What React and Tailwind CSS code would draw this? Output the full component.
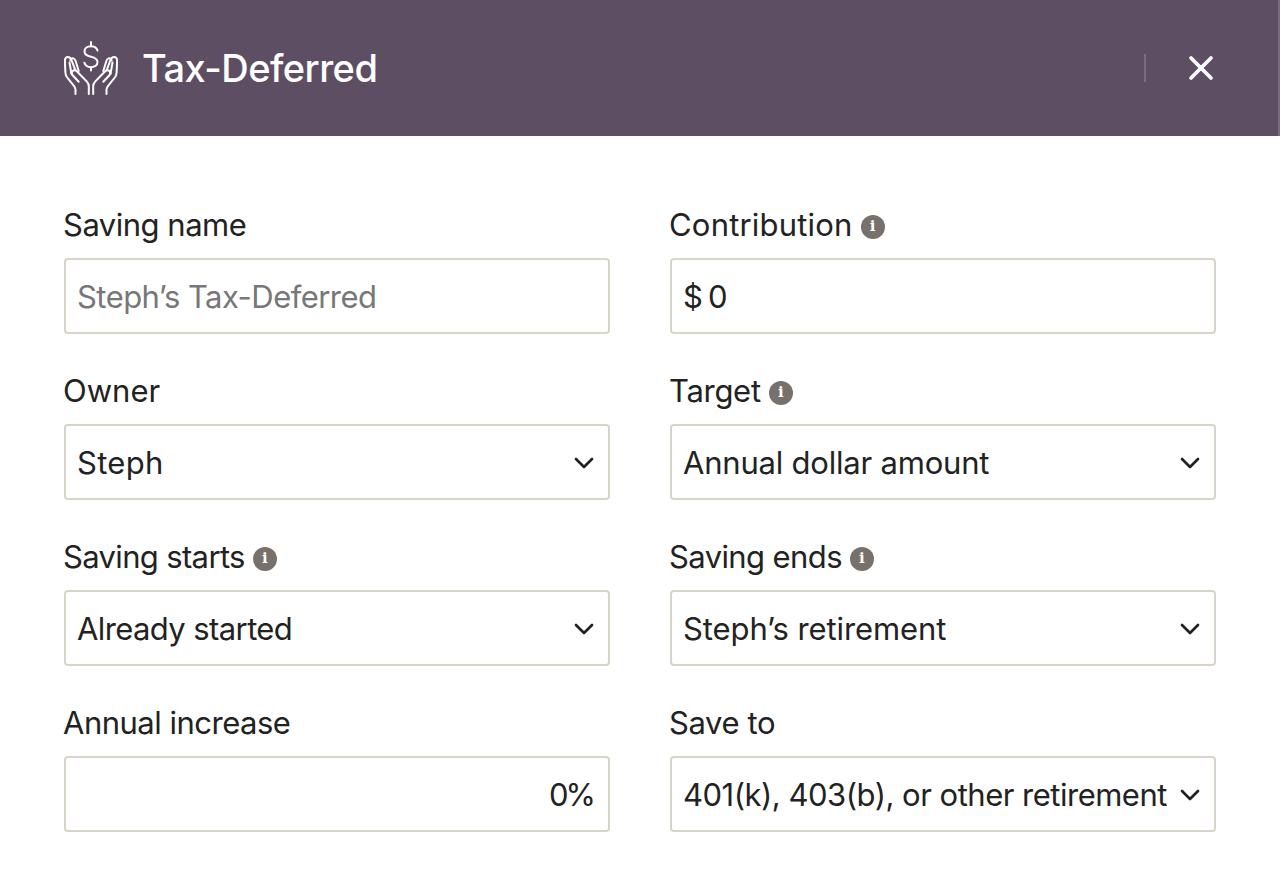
import { ChevronDown, X } from "lucide-react";

function HandsIcon() {
  const hand = (
    <>
      <path d="M11.5 53v-4.500c0-1.500-.8-2.600-1.800-3.800L3.200 36.500C2 35 1.500 33.600 1.400 31.800L.9 20.600c-.1-2.600 1-4.400 2.900-4.500 2-.1 3.100 1.300 3.900 3.400l3.600 9.700" />
      <path d="M6.400 19.500c.3-1.500 1.600-2.500 3-2.100 1.300.4 1.900 1.500 2.300 2.900l3 9.700" />
      <path d="M24.800 53v-7.500c0-2-.6-3.500-1.900-4.900L12.800 30.200c-1.300-1.400-3.200-1.300-4.300-.2-1.100 1.100-1.100 2.900.1 4.200l6.100 6.600" />
      <path d="M5.500 21.500l1.900 11" />
    </>
  );
  return (
    <svg width="54" height="54" viewBox="0 0 54 54" fill="none" stroke="white" strokeWidth="2" strokeLinecap="round" strokeLinejoin="round">
      <path d="M33.500 9.500c-.8-2.600-3.300-4.300-6.500-4.300-3.700 0-6.500 2.100-6.500 5.200 0 3.300 2.900 4.500 6.500 5.300 3.600.8 6.500 2.100 6.500 5.400 0 3.100-2.800 5.100-6.500 5.100-3.300 0-5.800-1.700-6.600-4.400" />
      <path d="M27 1v4.200M27 26.700v2.800" />
      {hand}
      <g transform="translate(54 0) scale(-1 1)">{hand}</g>
    </svg>
  );
}

function InfoDot() {
  return (
    <span className="mt-[3px] flex h-6 w-6 items-center justify-center rounded-full bg-[#77706b]">
      <span className="font-['DejaVu_Serif',serif] text-[15px] leading-none font-bold tracking-normal text-white">i</span>
    </span>
  );
}

function Field({ label, info, tracking = "tracking-[-0.4px]", children }) {
  return (
    <div>
      <div className={`mb-[14px] -ml-px flex h-[38px] items-center gap-2 text-[31px] leading-[38px] text-[#222222] ${tracking}`}>
        <span>{label}</span>
        {info && <InfoDot />}
      </div>
      {children}
    </div>
  );
}

const boxClass = "h-[76px] w-full rounded border-2 border-[#d9d4ca] bg-white pl-[11px] pr-3 text-[31px] text-[#222222] outline-none";

function Select({ value, tracking }) {
  return (
    <div className="relative">
      <select defaultValue={value} className={`${boxClass} appearance-none !pr-[42px] pt-[2px] ${tracking}`}>
        <option>{value}</option>
      </select>
      <ChevronDown className="pointer-events-none absolute top-1/2 right-[10px] h-8 w-8 -translate-y-[15px] text-[#222222]" strokeWidth={2} />
    </div>
  );
}

export default function App() {
  return (
    <div className="min-h-[896px] bg-white font-['Inter',sans-serif]">
      <header className="flex h-[136px] items-center border-r-2 border-[#7b6d80] bg-[#5d4e63] pr-[57px] pl-16">
        <HandsIcon />
        <h1 className="ml-6 text-[38px] leading-none font-medium tracking-[-0.55px] text-white">Tax-Deferred</h1>
        <div className="ml-auto h-7 w-0.5 bg-[#7b6d80]" />
        <button className="ml-[35px] text-white">
          <X className="h-10 w-10" strokeWidth={2.2} />
        </button>
      </header>

      <form className="grid grid-cols-2 gap-x-[60px] gap-y-[38px] px-16 pt-[70px]">
        <Field label="Saving name" tracking="tracking-[-0.5px]">
          <input className={`${boxClass} tracking-[-0.55px] placeholder:text-[#77777a]`} placeholder="Steph’s Tax-Deferred" />
        </Field>
        <Field label="Contribution" info tracking="tracking-[0.2px]">
          <input className={`${boxClass} tracking-[-0.3px] [word-spacing:-3px]`} defaultValue="$ 0" />
        </Field>
        <Field label="Owner" tracking="tracking-[0px]">
          <Select value="Steph" tracking="tracking-[0.3px]" />
        </Field>
        <Field label="Target" info tracking="tracking-[-0.3px]">
          <Select value="Annual dollar amount" tracking="tracking-[-0.2px]" />
        </Field>
        <Field label="Saving starts" info tracking="tracking-[-0.65px]">
          <Select value="Already started" tracking="tracking-[-0.6px]" />
        </Field>
        <Field label="Saving ends" info tracking="tracking-[-0.6px]">
          <Select value="Steph’s retirement" tracking="tracking-[-0.1px]" />
        </Field>
        <Field label="Annual increase" tracking="tracking-[-0.5px]">
          <input className={`${boxClass} !pr-[15px] text-right tracking-[-3px]`} defaultValue="0%" />
        </Field>
        <Field label="Save to">
          <Select value="401(k), 403(b), or other retirement" tracking="tracking-[-0.5px]" />
        </Field>
      </form>
    </div>
  );
}
